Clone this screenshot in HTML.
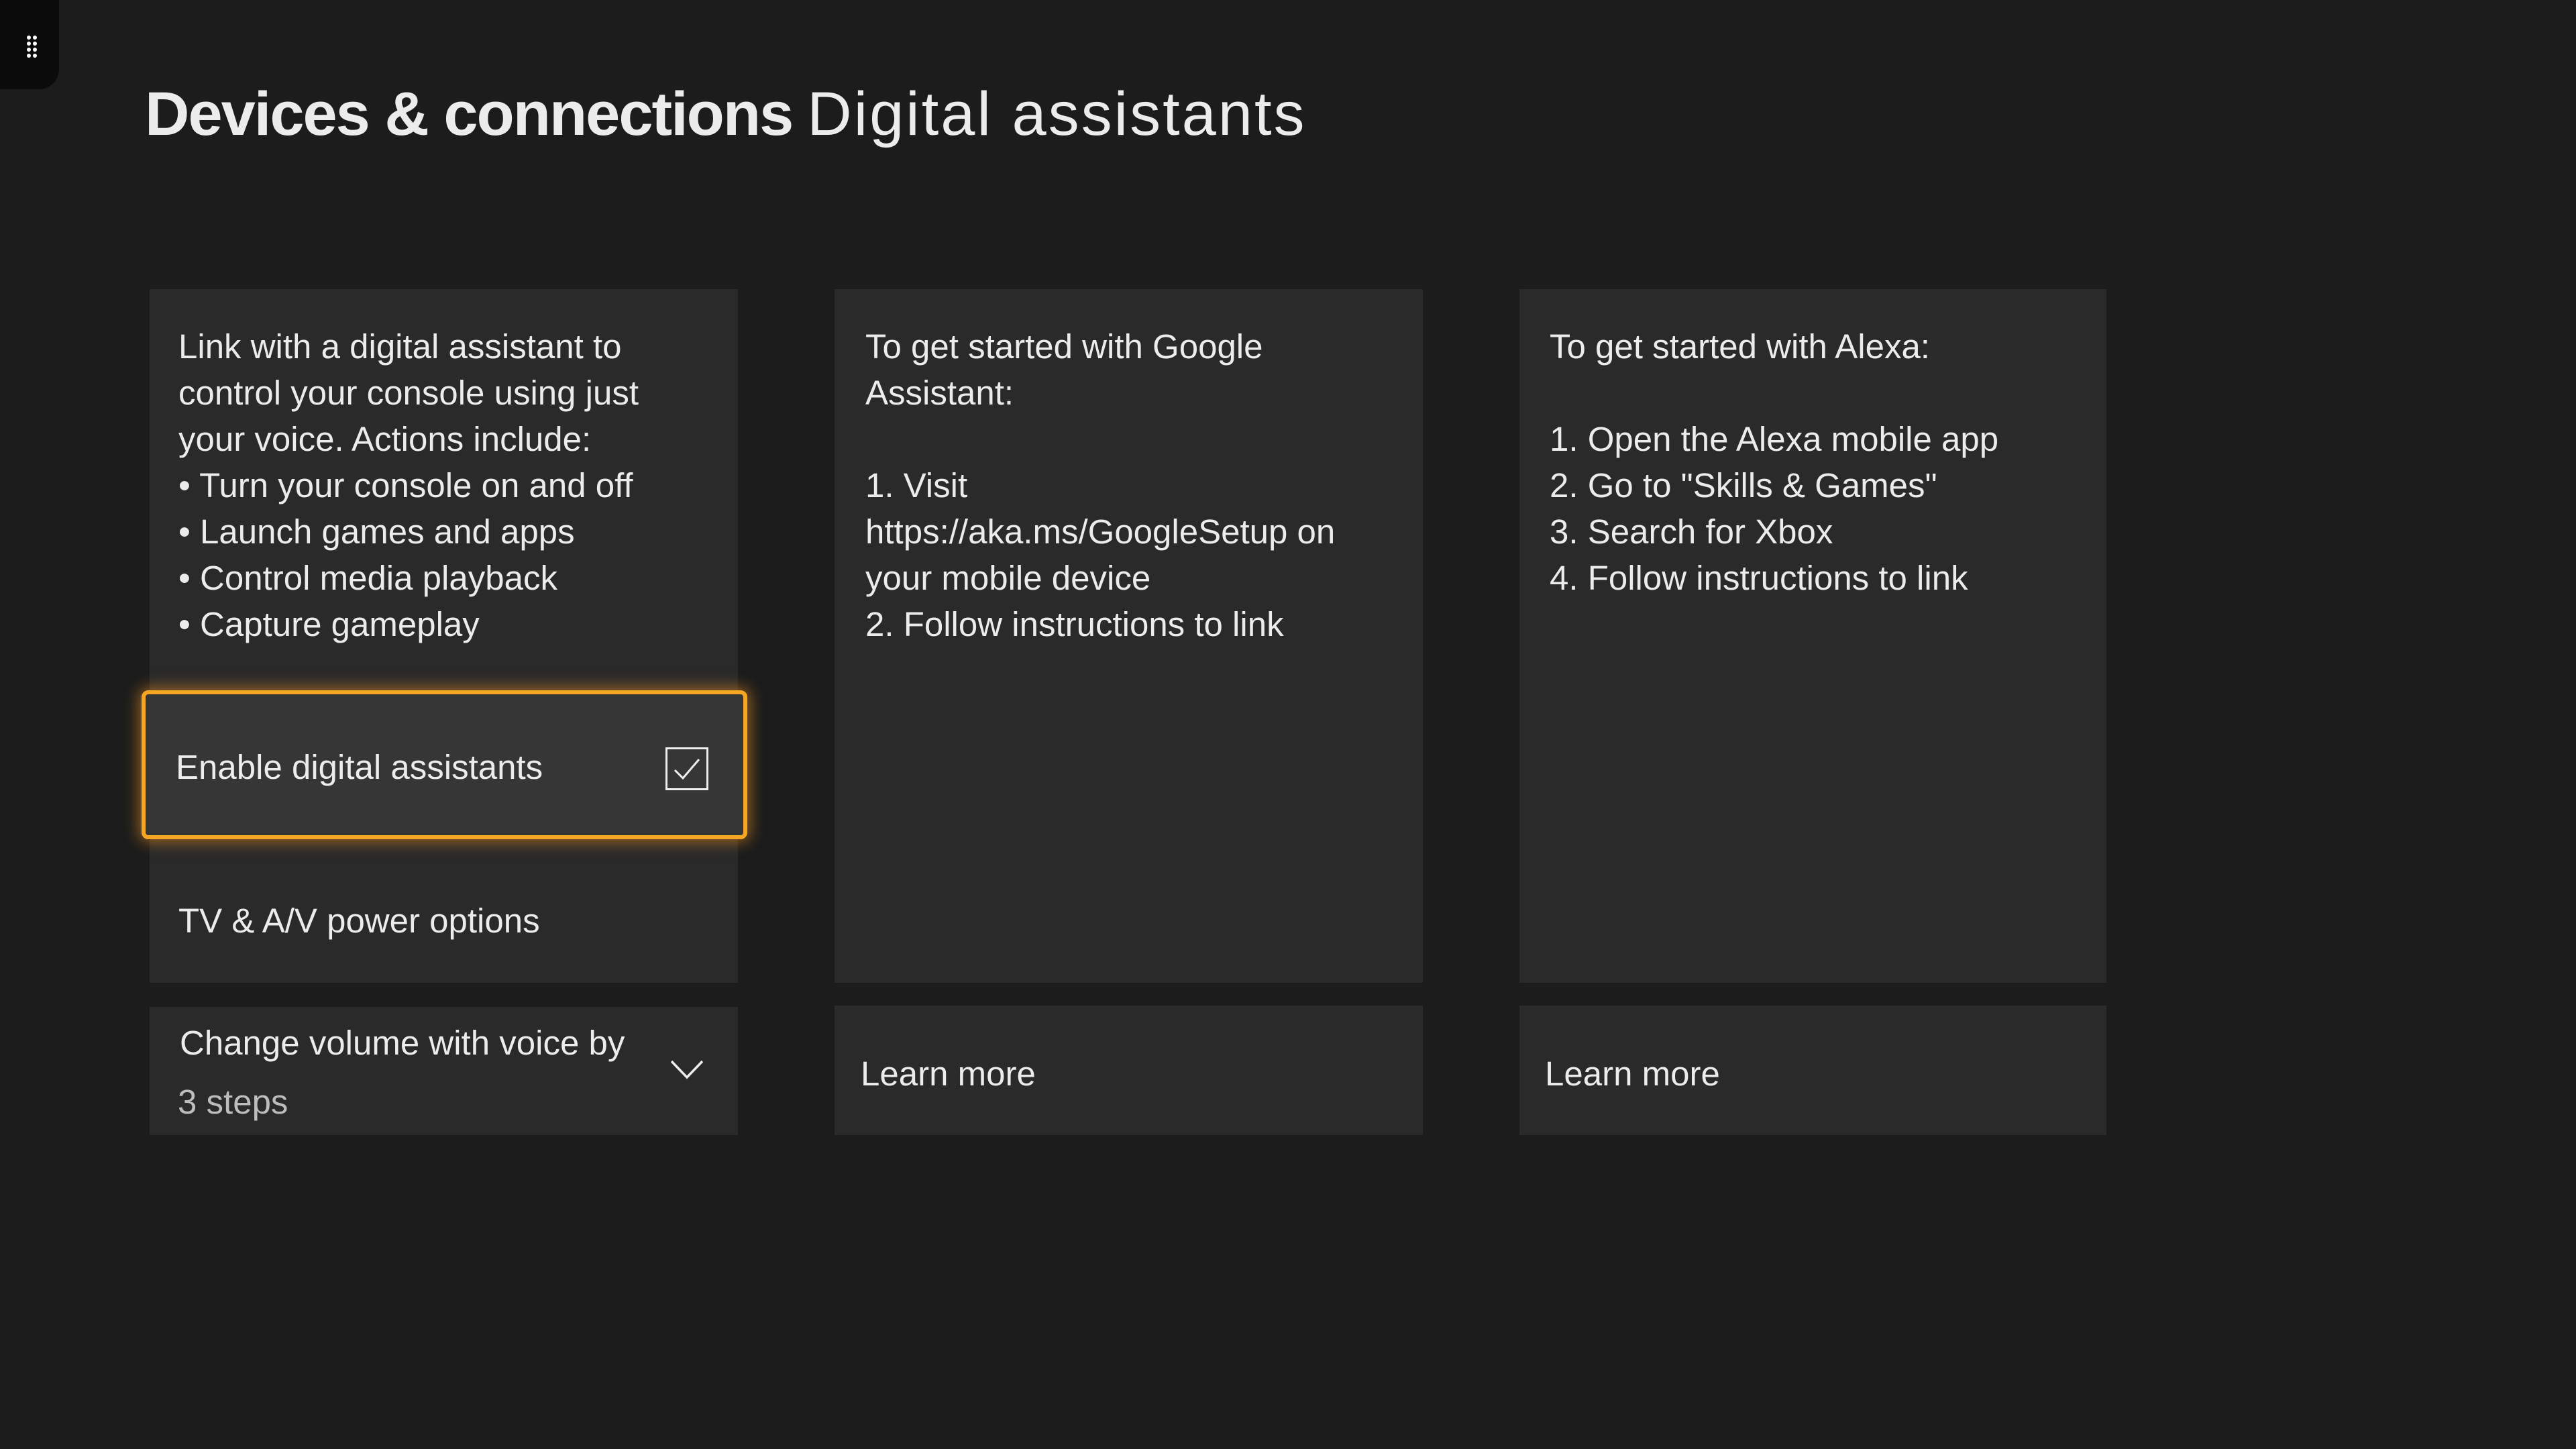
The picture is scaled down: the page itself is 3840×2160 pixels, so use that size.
<!DOCTYPE html>
<html><head><meta charset="utf-8"><style>
html,body{margin:0;padding:0}
body{width:3840px;height:2160px;background:#1c1c1c;position:relative;overflow:hidden;font-family:"Liberation Sans",sans-serif;color:#ececec}
.nub{position:absolute;left:0;top:0;width:88px;height:133px;background:#0b0b0b;border-bottom-right-radius:30px}
.dot{position:absolute;width:6px;height:6px;border-radius:50%;background:#fff}
.title{position:absolute;left:216px;top:118px;font-size:92px;white-space:nowrap}
.title b{font-weight:bold;letter-spacing:-2px}
.title span{margin-left:22px;font-weight:normal;letter-spacing:3px}
.panel{position:absolute;background:#2a2a2a}
.txt{position:absolute;font-size:51px;line-height:69px;white-space:nowrap}
.row{position:absolute;font-size:51px;white-space:nowrap}
</style></head><body>
<div class="nub">
<div class="dot" style="left:40px;top:53px"></div><div class="dot" style="left:49px;top:53px"></div>
<div class="dot" style="left:40px;top:62px"></div><div class="dot" style="left:49px;top:62px"></div>
<div class="dot" style="left:40px;top:71px"></div><div class="dot" style="left:49px;top:71px"></div>
<div class="dot" style="left:40px;top:80px"></div><div class="dot" style="left:49px;top:80px"></div>
</div>
<div class="title"><b>Devices &amp; connections</b><span>Digital assistants</span></div>

<div class="panel" style="left:223px;top:431px;width:877px;height:1034px"></div>
<div class="panel" style="left:1244px;top:431px;width:877px;height:1034px"></div>
<div class="panel" style="left:2265px;top:431px;width:875px;height:1034px"></div>

<div class="txt" style="left:266px;top:482px">Link with a digital assistant to<br>control your console using just<br>your voice. Actions include:<br>• Turn your console on and off<br>• Launch games and apps<br>• Control media playback<br>• Capture gameplay</div>
<div class="txt" style="left:1290px;top:482px">To get started with Google<br>Assistant:<br><br>1. Visit<br>https://aka.ms/GoogleSetup on<br>your mobile device<br>2. Follow instructions to link</div>
<div class="txt" style="left:2310px;top:482px">To get started with Alexa:<br><br>1. Open the Alexa mobile app<br>2. Go to "Skills &amp; Games"<br>3. Search for Xbox<br>4. Follow instructions to link</div>

<div style="position:absolute;left:211px;top:1029px;width:891px;height:210px;background:#363636;border:6px solid #f5a623;border-radius:10px;box-shadow:0 0 22px 4px rgba(245,150,30,.55)"></div>
<div class="row" style="left:262px;top:1114px">Enable digital assistants</div>
<div style="position:absolute;left:992px;top:1114px;width:58px;height:58px;border:3px solid #eee"></div>
<svg style="position:absolute;left:992px;top:1114px" width="64" height="64"><path d="M14 34 L26 46 L50 18" stroke="#eee" stroke-width="3" fill="none"/></svg>

<div class="row" style="left:266px;top:1343px">TV &amp; A/V power options</div>

<div class="panel" style="left:223px;top:1501px;width:877px;height:191px"></div>
<div class="row" style="left:268px;top:1525px">Change volume with voice by</div>
<div class="row" style="left:265px;top:1613px;color:#bdbdbd">3 steps</div>
<svg style="position:absolute;left:996px;top:1574px" width="56" height="40"><path d="M5 8 L28 32 L51 8" stroke="#eee" stroke-width="3.5" fill="none"/></svg>

<div class="panel" style="left:1244px;top:1499px;width:877px;height:193px"></div>
<div class="row" style="left:1283px;top:1571px">Learn more</div>
<div class="panel" style="left:2265px;top:1499px;width:875px;height:193px"></div>
<div class="row" style="left:2303px;top:1571px">Learn more</div>
</body></html>
